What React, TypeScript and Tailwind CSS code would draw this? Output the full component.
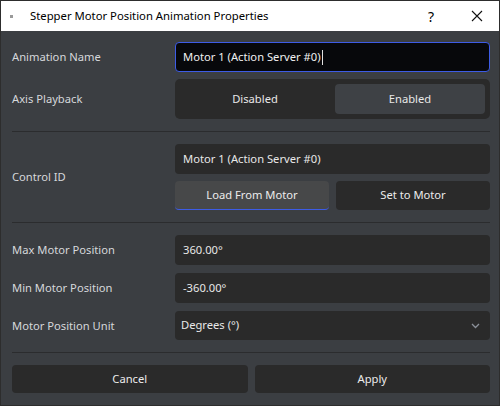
import React from 'react';

const font = { fontFamily: '"Segoe UI", "Noto Sans", "Open Sans", sans-serif' };

const Label: React.FC<{ children: React.ReactNode }> = ({ children }) => (
  <div className="text-[11.2px] text-[#d6d8db] leading-none">{children}</div>
);

const Field: React.FC<{ children: React.ReactNode; className?: string }> = ({ children, className = '' }) => (
  <div className={`h-[30px] rounded-[4px] bg-[#2a2a2a] flex items-center px-[8px] text-[11.2px] text-[#e8e8e8] ${className}`}>
    {children}
  </div>
);

const Separator = () => <div className="h-px bg-[#2b2c2e] my-[12px]" />;

export default function App() {
  return (
    <div className="w-[500px] h-[406px] border border-[#2d2d2d] bg-[#3b3e42] flex flex-col overflow-hidden" style={font}>
      {/* Title bar */}
      <div className="h-[30px] bg-white flex items-center shrink-0">
        <div className="w-[3px] h-[3px] bg-[#9a9a9a] ml-[9px]" />
        <span className="ml-[17px] text-[11.3px] text-black">Stepper Motor Position Animation Properties</span>
        <span className="ml-auto text-[14px] text-black mr-[37px]">?</span>
        <svg width="12" height="12" viewBox="0 0 12 12" className="mr-[16px]">
          <path d="M1 1 L11 11 M11 1 L1 11" stroke="#111" strokeWidth="1.1" />
        </svg>
      </div>

      {/* Body */}
      <div className="flex-1 pl-[11px] pr-[9px] pt-[11px]">
        <div className="grid grid-cols-[163px_1fr] gap-y-[7px] items-center">
          <Label>Animation Name</Label>
          <div className="h-[30px] rounded-[4px] bg-[#07080b] border border-[#3d5ce6] flex items-center px-[7px] text-[11.2px] text-[#f0f0f0]">
            Motor 1 (Action Server #0)<span className="w-px h-[15px] bg-[#e0e0e0] ml-px" />
          </div>

          <Label>Axis Playback</Label>
          <div className="h-[40px] rounded-[5px] bg-[#2a2a2a] p-[5px] flex gap-[5px]">
            <div className="flex-1 flex items-center justify-center text-[11.2px] text-[#e8e8e8]">Disabled</div>
            <div className="flex-1 flex items-center justify-center rounded-[4px] bg-[#3e4145] text-[11.2px] text-[#e8e8e8]">Enabled</div>
          </div>
        </div>

        <Separator />

        <div className="grid grid-cols-[163px_1fr] items-center">
          <Label>Control ID</Label>
          <div className="flex flex-col gap-[7px]">
            <Field>Motor 1 (Action Server #0)</Field>
            <div className="flex gap-[7px]">
              <div className="flex-1 h-[29px] rounded-[4px] bg-[#474849] border-b border-[#3d5ce6] flex items-center justify-center text-[11.2px] text-[#ececec]">
                Load From Motor
              </div>
              <div className="flex-1 h-[29px] rounded-[4px] bg-[#2a2a2a] flex items-center justify-center text-[11.2px] text-[#ececec]">
                Set to Motor
              </div>
            </div>
          </div>
        </div>

        <Separator />

        <div className="grid grid-cols-[163px_1fr] gap-y-[8px] items-center">
          <Label>Max Motor Position</Label>
          <Field>360.00°</Field>
          <Label>Min Motor Position</Label>
          <Field className="h-[29px]">-360.00°</Field>
          <Label>Motor Position Unit</Label>
          <div className="h-[29px] rounded-[4px] bg-[#2a2a2a] flex items-center pl-[6px] pr-[10px] text-[11.2px] text-[#e8e8e8]">
            <span>Degrees (°)</span>
            <svg width="9" height="6" viewBox="0 0 9 6" className="ml-auto">
              <path d="M1 1 L4.5 4.5 L8 1" fill="none" stroke="#8b9099" strokeWidth="1.3" />
            </svg>
          </div>
        </div>

        <Separator />

        <div className="flex gap-[7px]">
          <div className="flex-1 h-[28px] rounded-[4px] bg-[#2a2a2a] flex items-center justify-center text-[11.2px] text-[#ececec]">Cancel</div>
          <div className="flex-1 h-[28px] rounded-[4px] bg-[#2a2a2a] flex items-center justify-center text-[11.2px] text-[#ececec]">Apply</div>
        </div>
      </div>
    </div>
  );
}
